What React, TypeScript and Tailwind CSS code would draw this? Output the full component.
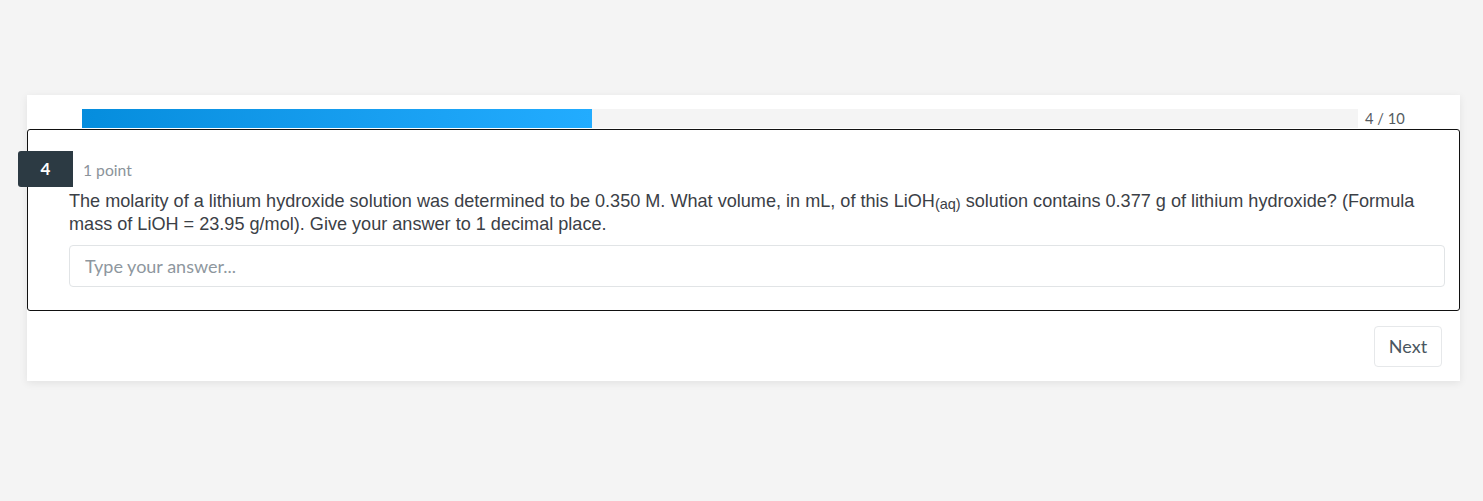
export default function App() {
  const current = 4;
  const total = 10;

  return (
    <div className="h-[501px] bg-[#f4f4f4] pt-[95px] font-['Lato',sans-serif]">
      <div className="ml-[27px] w-[1433px] bg-white shadow-[0_2px_8px_rgba(0,0,0,0.08)]">
        {/* progress */}
        <div className="flex items-end pl-[55px] pt-[14px]">
          <div className="h-[19px] w-[1276px] bg-[#f4f4f4]">
            <div
              className="h-full bg-gradient-to-r from-[#058ddd] to-[#22acff]"
              style={{ width: `${(current / total) * 100}%` }}
            />
          </div>
          <span className="ml-[7px] text-[14.7px] leading-[19px] text-[#555b61]">
            {current} / {total}
          </span>
        </div>

        {/* question */}
        <div className="relative mt-px rounded-[3px] border border-[#111] pb-[23px] pl-[41px] pr-[14px] pt-[21px]">
          <div className="absolute left-[-10px] top-[21px] flex h-[36px] w-[55px] items-center justify-center rounded-l-[3px] bg-[#2c3a43] text-[17px] font-bold text-white">
            {current}
          </div>
          <div className="flex h-[36px] items-center pl-[14px] pt-[3px] text-[15.7px] text-[#8b939a]">1 point</div>
          <p className="mt-[3px] font-['Liberation_Sans',Arial,sans-serif] text-[18.1px] leading-[23px] text-[#3b4046]">
            The molarity of a lithium hydroxide solution was determined to be 0.350 M. What volume, in mL, of this LiOH
            <span className="align-[-2px] text-[14.5px] leading-none">(aq)</span> solution contains 0.377 g of lithium
            hydroxide? (Formula mass of LiOH = 23.95 g/mol). Give your answer to 1 decimal place.
          </p>
          <input
            type="text"
            placeholder="Type your answer..."
            className="mt-[9px] block h-[42px] w-full rounded-[4px] border border-[#e1e4e6] px-[15px] text-[18px] text-[#3b4046] outline-none placeholder:text-[#8e979e]"
          />
        </div>

        {/* footer */}
        <div className="flex justify-end pb-[14px] pr-[18px] pt-[15px]">
          <button className="h-[41px] w-[68px] rounded-[4px] border border-[#e6e8ea] bg-white text-[18px] text-[#4a5660]">
            Next
          </button>
        </div>
      </div>
    </div>
  );
}
